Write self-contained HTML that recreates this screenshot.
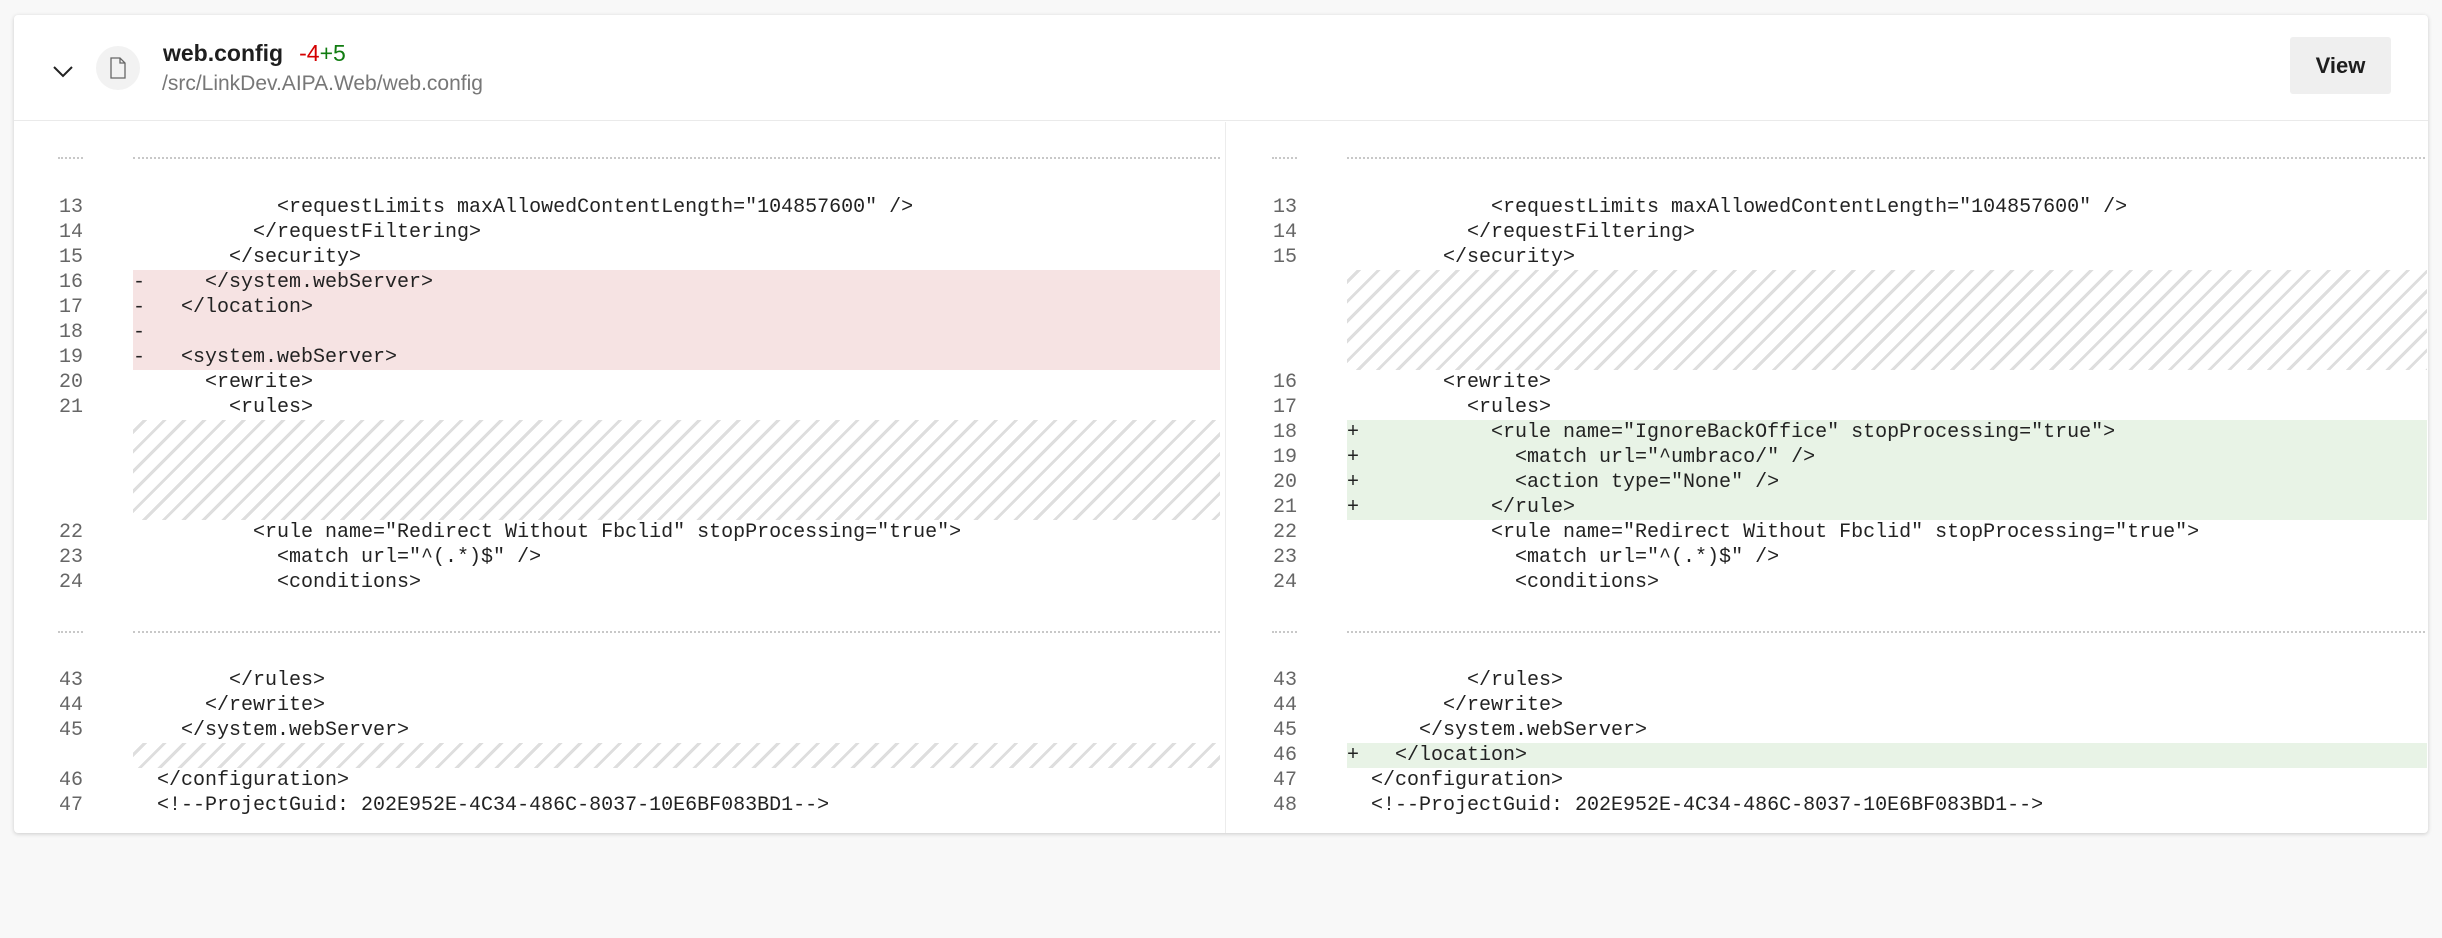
<!DOCTYPE html>
<html><head><meta charset="utf-8">
<style>
*{margin:0;padding:0;box-sizing:border-box}
body{width:2442px;height:938px;background:#f8f8f8;position:relative;overflow:hidden;font-family:"Liberation Sans",sans-serif}
.card{position:absolute;left:14px;top:15px;width:2414px;height:818px;background:#fff;border-radius:4px;box-shadow:0 1px 4px rgba(0,0,0,.18)}
.hdr{position:absolute;left:0;top:0;width:100%;height:106px;border-bottom:1px solid #eaeaea}
.btn{position:absolute;left:2276px;top:22px;width:101px;height:57px;background:#efefef;border-radius:3px;font-weight:bold;font-size:22px;color:#1e1e1e;text-align:center;line-height:57px}
.r{position:absolute;height:25px;line-height:25px;font-family:"Liberation Mono",monospace;font-size:20px;white-space:pre;color:#222}
.n{position:absolute;width:50px;text-align:right;height:25px;line-height:25px;font-family:"Liberation Mono",monospace;font-size:20px;color:#666}
.del{background:#f6e3e3}
.add{background:#e8f3e6}
.hatch{position:absolute;background:repeating-linear-gradient(135deg,#fff 0 7px,#dedede 7px 10px,#fff 10px 14px)}
.dot{position:absolute;height:0;border-top:2px dotted #c8c8c8}
.vd{position:absolute;left:1225px;top:122px;width:1px;height:711px;background:#ececec}
</style></head><body>
<div class="card">
<div class="hdr">
<svg style="position:absolute;left:39px;top:51px" width="20" height="12" viewBox="0 0 20 12"><path d="M1 1 L10 10 L19 1" fill="none" stroke="#222" stroke-width="2"/></svg>
<div style="position:absolute;left:82px;top:31px;width:44px;height:44px;border-radius:50%;background:#f2f2f2"></div>
<svg style="position:absolute;left:96px;top:42px" width="16" height="22" viewBox="0 0 16 22"><path d="M1 1 H10 L15 6 V21 H1 Z M10 1 V6 H15" fill="none" stroke="#666" stroke-width="1.3"/></svg>
<div style="position:absolute;left:149px;top:25px;font-size:23px;font-weight:bold;color:#1e1e1e;white-space:nowrap">web.config<span style="color:#d40000;font-weight:normal;margin-left:16px">-4</span><span style="color:#107c10;font-weight:normal">+5</span></div>
<div style="position:absolute;left:148px;top:57px;font-size:21px;color:#777;white-space:nowrap">/src/LinkDev.AIPA.Web/web.config</div>
<div class="btn">View</div>
</div>
</div>
<div class="vd"></div>

<div class="dot" style="left:58px;top:157px;width:25px"></div>
<div class="dot" style="left:133px;top:157px;width:1087px"></div>
<div class="dot" style="left:1272px;top:157px;width:25px"></div>
<div class="dot" style="left:1347px;top:157px;width:1078px"></div>
<div class="dot" style="left:58px;top:631px;width:25px"></div>
<div class="dot" style="left:133px;top:631px;width:1087px"></div>
<div class="dot" style="left:1272px;top:631px;width:25px"></div>
<div class="dot" style="left:1347px;top:631px;width:1078px"></div>

<div class="hatch" style="left:133px;top:420px;width:1087px;height:100px"></div>
<div class="hatch" style="left:133px;top:743px;width:1087px;height:25px"></div>
<div class="hatch" style="left:1347px;top:270px;width:1080px;height:100px"></div>

<div class="n" style="left:33px;top:195px">13</div><div class="r" style="left:133px;top:195px;width:1087px">            &lt;requestLimits maxAllowedContentLength="104857600" /&gt;</div>
<div class="n" style="left:33px;top:220px">14</div><div class="r" style="left:133px;top:220px;width:1087px">          &lt;/requestFiltering&gt;</div>
<div class="n" style="left:33px;top:245px">15</div><div class="r" style="left:133px;top:245px;width:1087px">        &lt;/security&gt;</div>
<div class="n" style="left:33px;top:270px">16</div><div class="r del" style="left:133px;top:270px;width:1087px">-     &lt;/system.webServer&gt;</div>
<div class="n" style="left:33px;top:295px">17</div><div class="r del" style="left:133px;top:295px;width:1087px">-   &lt;/location&gt;</div>
<div class="n" style="left:33px;top:320px">18</div><div class="r del" style="left:133px;top:320px;width:1087px">-</div>
<div class="n" style="left:33px;top:345px">19</div><div class="r del" style="left:133px;top:345px;width:1087px">-   &lt;system.webServer&gt;</div>
<div class="n" style="left:33px;top:370px">20</div><div class="r" style="left:133px;top:370px">      &lt;rewrite&gt;</div>
<div class="n" style="left:33px;top:395px">21</div><div class="r" style="left:133px;top:395px">        &lt;rules&gt;</div>
<div class="n" style="left:33px;top:520px">22</div><div class="r" style="left:133px;top:520px">          &lt;rule name="Redirect Without Fbclid" stopProcessing="true"&gt;</div>
<div class="n" style="left:33px;top:545px">23</div><div class="r" style="left:133px;top:545px">            &lt;match url="^(.*)$" /&gt;</div>
<div class="n" style="left:33px;top:570px">24</div><div class="r" style="left:133px;top:570px">            &lt;conditions&gt;</div>
<div class="n" style="left:33px;top:668px">43</div><div class="r" style="left:133px;top:668px">        &lt;/rules&gt;</div>
<div class="n" style="left:33px;top:693px">44</div><div class="r" style="left:133px;top:693px">      &lt;/rewrite&gt;</div>
<div class="n" style="left:33px;top:718px">45</div><div class="r" style="left:133px;top:718px">    &lt;/system.webServer&gt;</div>
<div class="n" style="left:33px;top:768px">46</div><div class="r" style="left:133px;top:768px">  &lt;/configuration&gt;</div>
<div class="n" style="left:33px;top:793px">47</div><div class="r" style="left:133px;top:793px">  &lt;!--ProjectGuid: 202E952E-4C34-486C-8037-10E6BF083BD1--&gt;</div>

<div class="n" style="left:1247px;top:195px">13</div><div class="r" style="left:1347px;top:195px">            &lt;requestLimits maxAllowedContentLength="104857600" /&gt;</div>
<div class="n" style="left:1247px;top:220px">14</div><div class="r" style="left:1347px;top:220px">          &lt;/requestFiltering&gt;</div>
<div class="n" style="left:1247px;top:245px">15</div><div class="r" style="left:1347px;top:245px">        &lt;/security&gt;</div>
<div class="n" style="left:1247px;top:370px">16</div><div class="r" style="left:1347px;top:370px">        &lt;rewrite&gt;</div>
<div class="n" style="left:1247px;top:395px">17</div><div class="r" style="left:1347px;top:395px">          &lt;rules&gt;</div>
<div class="n" style="left:1247px;top:420px">18</div><div class="r add" style="left:1347px;top:420px;width:1080px">+           &lt;rule name="IgnoreBackOffice" stopProcessing="true"&gt;</div>
<div class="n" style="left:1247px;top:445px">19</div><div class="r add" style="left:1347px;top:445px;width:1080px">+             &lt;match url="^umbraco/" /&gt;</div>
<div class="n" style="left:1247px;top:470px">20</div><div class="r add" style="left:1347px;top:470px;width:1080px">+             &lt;action type="None" /&gt;</div>
<div class="n" style="left:1247px;top:495px">21</div><div class="r add" style="left:1347px;top:495px;width:1080px">+           &lt;/rule&gt;</div>
<div class="n" style="left:1247px;top:520px">22</div><div class="r" style="left:1347px;top:520px">            &lt;rule name="Redirect Without Fbclid" stopProcessing="true"&gt;</div>
<div class="n" style="left:1247px;top:545px">23</div><div class="r" style="left:1347px;top:545px">              &lt;match url="^(.*)$" /&gt;</div>
<div class="n" style="left:1247px;top:570px">24</div><div class="r" style="left:1347px;top:570px">              &lt;conditions&gt;</div>
<div class="n" style="left:1247px;top:668px">43</div><div class="r" style="left:1347px;top:668px">          &lt;/rules&gt;</div>
<div class="n" style="left:1247px;top:693px">44</div><div class="r" style="left:1347px;top:693px">        &lt;/rewrite&gt;</div>
<div class="n" style="left:1247px;top:718px">45</div><div class="r" style="left:1347px;top:718px">      &lt;/system.webServer&gt;</div>
<div class="n" style="left:1247px;top:743px">46</div><div class="r add" style="left:1347px;top:743px;width:1080px">+   &lt;/location&gt;</div>
<div class="n" style="left:1247px;top:768px">47</div><div class="r" style="left:1347px;top:768px">  &lt;/configuration&gt;</div>
<div class="n" style="left:1247px;top:793px">48</div><div class="r" style="left:1347px;top:793px">  &lt;!--ProjectGuid: 202E952E-4C34-486C-8037-10E6BF083BD1--&gt;</div>
</body></html>
